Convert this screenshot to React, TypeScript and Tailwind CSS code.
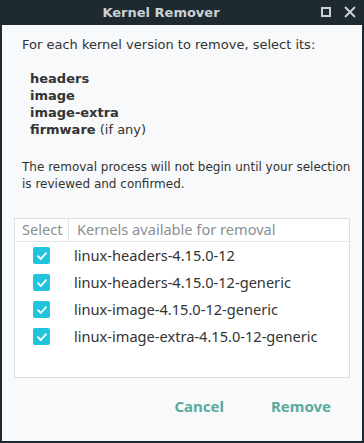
import React from "react";

const kernels = [
  "linux-headers-4.15.0-12",
  "linux-headers-4.15.0-12-generic",
  "linux-image-4.15.0-12-generic",
  "linux-image-extra-4.15.0-12-generic",
];

function Check() {
  return (
    <div className="w-[17px] h-[17px] rounded-[2px] bg-[#22c3dc] flex items-center justify-center">
      <svg width="12" height="12" viewBox="0 0 12 12">
        <path d="M2 6.2 L4.8 9 L10 3.2" fill="none" stroke="white" strokeWidth="1.8" strokeLinecap="round" strokeLinejoin="round" />
      </svg>
    </div>
  );
}

export default function App() {
  return (
    <div className="w-[364px] h-[443px] bg-[#1f2a30] flex flex-col">
      <div className="h-[25px] flex items-center relative">
        <div className="flex-1 text-center text-[13px] font-bold text-[#c9d1d5] pr-[42px]" style={{ fontFamily: '"DejaVu Sans", sans-serif' }}>
          Kernel Remover
        </div>
        <div className="absolute right-[8px] top-[6px] flex items-center gap-[13px]">
          <div className="w-[10px] h-[10px] border-2 border-[#c9d1d5]" />
          <svg width="12" height="12" viewBox="0 0 12 12">
            <path d="M1 1 L11 11 M11 1 L1 11" stroke="#c9d1d5" strokeWidth="2" />
          </svg>
        </div>
      </div>
      <div className="mx-[2px] mb-[2px] flex-1 bg-[#f7f9fa] flex flex-col text-[#333333]" style={{ fontFamily: '"DejaVu Sans", sans-serif' }}>
        <div className="pl-[20px] pt-[11px] text-[13px] leading-[17px]">For each kernel version to remove, select its:</div>
        <div className="pl-[28px] pt-[17px] text-[13px] leading-[17px]">
          <div className="font-bold">headers</div>
          <div className="font-bold">image</div>
          <div className="font-bold">image-extra</div>
          <div><span className="font-bold">firmware</span> (if any)</div>
        </div>
        <div className="pl-[20px] pt-[21px] text-[12px] leading-[17px]">
          The removal process will not begin until your selection<br />is reviewed and confirmed.
        </div>
        <div className="mx-[12px] mt-[25px] h-[160px] border border-[#dcdfe0] bg-white" style={{ fontFamily: '"Noto Sans", sans-serif' }}>
          <div className="h-[23px] flex items-center border-b border-[#e4e6e7] text-[14.6px] text-[#8a8f92]">
            <div className="w-[54px] pl-[7px] border-r border-[#e4e6e7] h-full flex items-center">Select</div>
            <div className="pl-[8px]">Kernels available for removal</div>
          </div>
          <div className="flex flex-col">
            {kernels.map((k) => (
              <div key={k} className="h-[27px] flex items-center">
                <div className="pl-[18px] w-[59px]"><Check /></div>
                <div className="text-[14.6px] text-[#333]">{k}</div>
              </div>
            ))}
          </div>
        </div>
        <div className="flex justify-end gap-[47px] pr-[31px] pt-[17px] text-[15px] font-bold text-[#5aaaa0]" style={{ fontFamily: '"Noto Sans", sans-serif' }}>
          <span>Cancel</span>
          <span>Remove</span>
        </div>
      </div>
    </div>
  );
}
